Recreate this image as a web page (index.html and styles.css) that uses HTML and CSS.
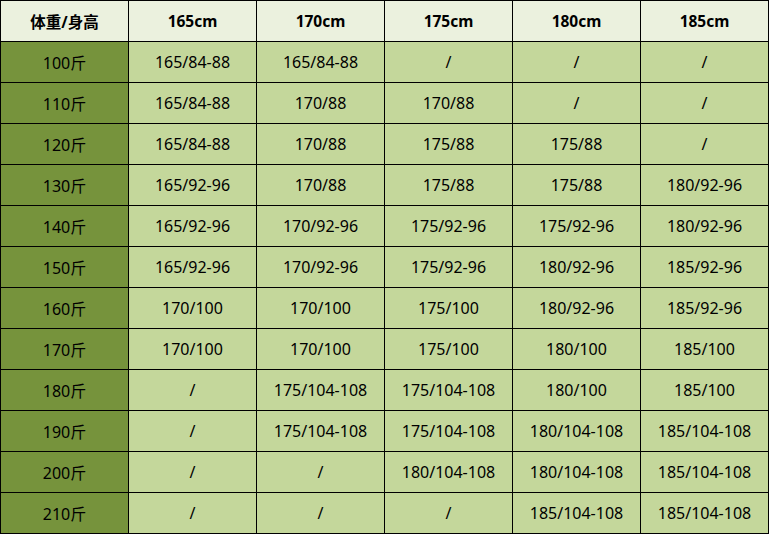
FILE: index.html
```html
<!DOCTYPE html>
<html lang="zh">
<head>
<meta charset="utf-8">
<link rel="stylesheet" href="styles.css">
</head>
<body>
<div class="grid">
  <div class="c h">体重/身高</div><div class="c h">165cm</div><div class="c h">170cm</div><div class="c h">175cm</div><div class="c h">180cm</div><div class="c h">185cm</div>
  <div class="c w">100斤</div><div class="c">165/84-88</div><div class="c">165/84-88</div><div class="c">/</div><div class="c">/</div><div class="c">/</div>
  <div class="c w">110斤</div><div class="c">165/84-88</div><div class="c">170/88</div><div class="c">170/88</div><div class="c">/</div><div class="c">/</div>
  <div class="c w">120斤</div><div class="c">165/84-88</div><div class="c">170/88</div><div class="c">175/88</div><div class="c">175/88</div><div class="c">/</div>
  <div class="c w">130斤</div><div class="c">165/92-96</div><div class="c">170/88</div><div class="c">175/88</div><div class="c">175/88</div><div class="c">180/92-96</div>
  <div class="c w">140斤</div><div class="c">165/92-96</div><div class="c">170/92-96</div><div class="c">175/92-96</div><div class="c">175/92-96</div><div class="c">180/92-96</div>
  <div class="c w">150斤</div><div class="c">165/92-96</div><div class="c">170/92-96</div><div class="c">175/92-96</div><div class="c">180/92-96</div><div class="c">185/92-96</div>
  <div class="c w">160斤</div><div class="c">170/100</div><div class="c">170/100</div><div class="c">175/100</div><div class="c">180/92-96</div><div class="c">185/92-96</div>
  <div class="c w">170斤</div><div class="c">170/100</div><div class="c">170/100</div><div class="c">175/100</div><div class="c">180/100</div><div class="c">185/100</div>
  <div class="c w">180斤</div><div class="c">/</div><div class="c">175/104-108</div><div class="c">175/104-108</div><div class="c">180/100</div><div class="c">185/100</div>
  <div class="c w">190斤</div><div class="c">/</div><div class="c">175/104-108</div><div class="c">175/104-108</div><div class="c">180/104-108</div><div class="c">185/104-108</div>
  <div class="c w">200斤</div><div class="c">/</div><div class="c">/</div><div class="c">180/104-108</div><div class="c">180/104-108</div><div class="c">185/104-108</div>
  <div class="c w">210斤</div><div class="c">/</div><div class="c">/</div><div class="c">/</div><div class="c">185/104-108</div><div class="c">185/104-108</div>
</div>
</body>
</html>
```
FILE: styles.css
```css
html, body {
  margin: 0;
  padding: 0;
  background: #ffffff;
}
.grid {
  display: grid;
  grid-template-columns: repeat(6, 127px);
  grid-auto-rows: 40px;
  gap: 1px;
  padding: 1px;
  background: #000000;
  width: 767px;
  font-family: "Noto Sans", "Noto Sans CJK SC", sans-serif;
  font-size: 16px;
  color: #000000;
}
.c {
  background: #c4d79b;
  display: flex;
  align-items: center;
  justify-content: center;
  white-space: nowrap;
}
.h {
  background: #ebf1de;
  font-weight: bold;
  font-size: 15.5px;
}
.w {
  background: #76933c;
}
```
